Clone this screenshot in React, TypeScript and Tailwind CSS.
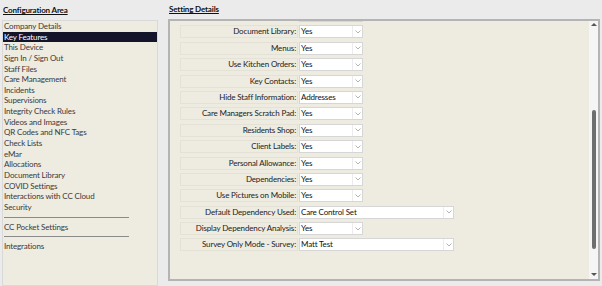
import React from "react";

const items = [
  "Company Details",
  "Key Features",
  "This Device",
  "Sign In / Sign Out",
  "Staff Files",
  "Care Management",
  "Incidents",
  "Supervisions",
  "Integrity Check Rules",
  "Videos and Images",
  "QR Codes and NFC Tags",
  "Check Lists",
  "eMar",
  "Allocations",
  "Document Library",
  "COVID Settings",
  "Interactions with CC Cloud",
  "Security",
];

const rows: { label: string; value: string; wide?: boolean }[] = [
  { label: "Document Library:", value: "Yes" },
  { label: "Menus:", value: "Yes" },
  { label: "Use Kitchen Orders:", value: "Yes" },
  { label: "Key Contacts:", value: "Yes" },
  { label: "Hide Staff Information:", value: "Addresses" },
  { label: "Care Managers Scratch Pad:", value: "Yes" },
  { label: "Residents Shop:", value: "Yes" },
  { label: "Client Labels:", value: "Yes" },
  { label: "Personal Allowance:", value: "Yes" },
  { label: "Dependencies:", value: "Yes" },
  { label: "Use Pictures on Mobile:", value: "Yes" },
  { label: "Default Dependency Used:", value: "Care Control Set", wide: true },
  { label: "Display Dependency Analysis:", value: "Yes" },
  { label: "Survey Only Mode - Survey:", value: "Matt Test", wide: true },
];

function Chevron() {
  return (
    <svg width="6" height="4" viewBox="0 0 6 4">
      <path d="M0.5 0.5 L3 3 L5.5 0.5" fill="none" stroke="#a0a0a0" strokeWidth="0.8" />
    </svg>
  );
}

function Select({ value, wide }: { value: string; wide?: boolean }) {
  return (
    <div
      className={`flex h-[13px] items-stretch border border-[#d6d6d6] bg-white ${
        wide ? "w-[155px]" : "w-[64px]"
      }`}
    >
      <div className="flex-1 pl-[1px] leading-[11px] text-[#111]">{value}</div>
      <div className="flex w-[10px] items-center justify-center border-l border-[#ececec]">
        <Chevron />
      </div>
    </div>
  );
}

export default function App() {
  return (
    <div
      className="relative h-[286px] w-[602px] overflow-hidden bg-[#ebebeb] text-[8px] tracking-[-0.15px] text-[#222]"
      style={{ fontFamily: 'Lato, "Open Sans", sans-serif' }}
    >
      <div className="flex h-full">
        {/* Left */}
        <div className="flex w-[158px] flex-col pl-[2px]">
          <div className="h-[20px] pl-[1px] pt-[4px] text-[8px] font-bold leading-[12px] text-[#111] underline">
            Configuration Area
          </div>
          <div className="flex-1 border border-[#d9d9d9] bg-[#eeebe0]">
            {items.map((it) => (
              <div
                key={it}
                className={`h-[10.65px] pl-[1px] leading-[10.65px] ${
                  it === "Key Features" ? "bg-[#14142a] text-white" : "text-[#3a3a3a]"
                }`}
              >
                {it}
              </div>
            ))}
            <div className="mx-[1px] my-[4px] h-[1px] w-[125px] bg-[#8a8a8a]" />
            <div className="h-[10.65px] pl-[1px] leading-[10.65px] text-[#3a3a3a]">CC Pocket Settings</div>
            <div className="mx-[1px] my-[4px] h-[1px] w-[125px] bg-[#8a8a8a]" />
            <div className="h-[10.65px] pl-[1px] leading-[10.65px] text-[#3a3a3a]">Integrations</div>
          </div>
        </div>

        {/* Right */}
        <div className="ml-[10px] flex w-[432px] flex-col">
          <div className="h-[19px] pl-[1px] pt-[3px] text-[8px] font-bold leading-[12px] text-[#111] underline">
            Setting Details
          </div>
          <div className="mb-[5px] flex flex-1 overflow-hidden border-2 border-[#b4b4b4] bg-[#eeebe0]">
            <div className="relative flex-1 overflow-hidden">
              <div className="mt-[-12px] flex flex-col gap-[3.4px] pl-[10px]">
                <div className="flex h-[13px] items-center">
                  <div className="h-full w-[118px]" />
                  <div className="ml-[1px] h-full w-[64px] border border-[#d6d6d6] bg-white" />
                </div>
                {rows.map((r) => (
                  <div key={r.label} className="flex h-[13px] items-center">
                    <div className="h-full w-[118px] border border-[#e4e1d6] pr-[1px] text-right leading-[11px] text-[#222]">
                      {r.label}
                    </div>
                    <div className="ml-[1px]">
                      <Select value={r.value} wide={r.wide} />
                    </div>
                  </div>
                ))}
              </div>
            </div>
            {/* scrollbar */}
            <div className="flex w-[9px] flex-col items-center bg-[#f5f5f5]">
              <div className="mt-[2px] h-0 w-0 border-x-[3px] border-b-[3px] border-x-transparent border-b-[#555]" />
              <div className="flex w-full flex-1 flex-col items-center">
                <div className="mt-[84px] h-[139px] w-[4px] rounded-[2px] bg-[#6e6e6e]" />
              </div>
              <div className="mb-[3px] h-0 w-0 border-x-[3px] border-t-[3px] border-x-transparent border-t-[#555]" />
            </div>
          </div>
        </div>
      </div>
    </div>
  );
}
